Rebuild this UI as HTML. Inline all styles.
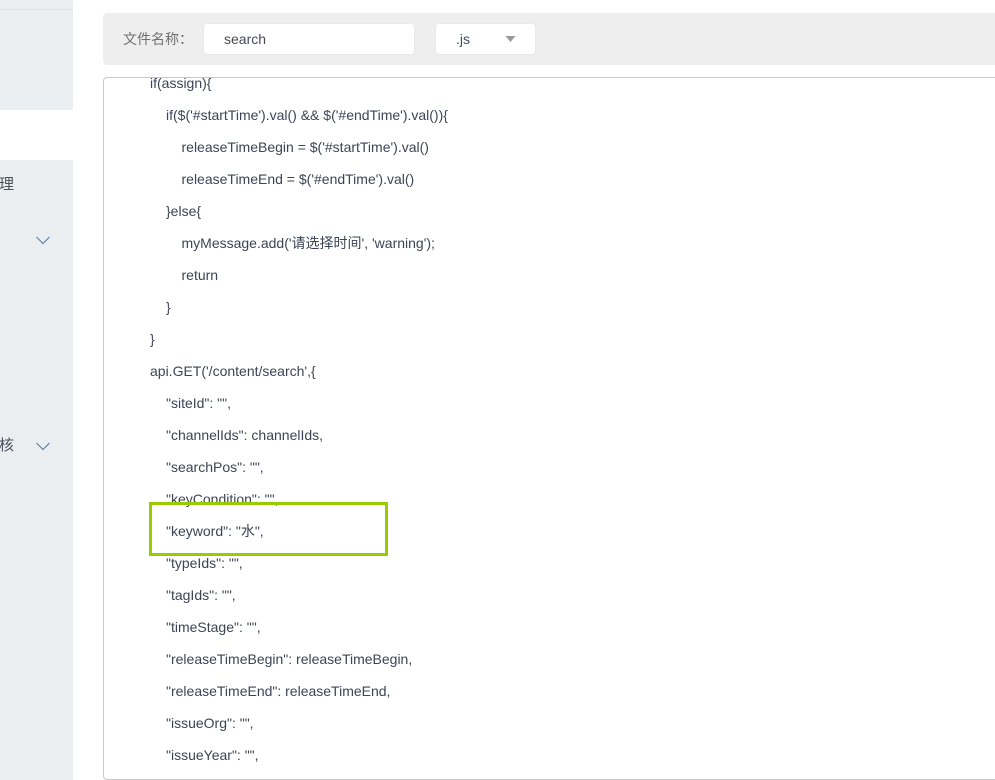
<!DOCTYPE html>
<html>
<head>
<meta charset="utf-8">
<style>
html,body{margin:0;padding:0;width:995px;height:780px;overflow:hidden;background:#fff;font-family:"Liberation Sans","Noto Sans CJK SC",sans-serif;}
.abs{position:absolute;}
.l{position:absolute;font-size:14px;line-height:32px;height:32px;color:#3b4556;white-space:pre;}
</style>
</head>
<body>
<div class="abs" style="left:0;top:0;width:73px;height:110px;background:#ebeef1;"></div>
<div class="abs" style="left:0;top:9px;width:73px;height:1px;background:#dcdfe3;"></div>
<div class="abs" style="left:0;top:160px;width:73px;height:620px;background:#ebeef1;"></div>
<div class="abs" style="left:-1px;top:175px;font-size:15px;line-height:20px;color:#48505c;">理</div>
<div class="abs" style="left:-1px;top:436px;font-size:15px;line-height:20px;color:#48505c;">核</div>
<svg class="abs" style="left:35px;top:235px" width="16" height="11"><path d="M1.500 2L8 8.500L14.500 2" fill="none" stroke="#5b83a8" stroke-width="1.200"/></svg>
<svg class="abs" style="left:35px;top:441px" width="16" height="11"><path d="M1.500 2L8 8.500L14.500 2" fill="none" stroke="#5b83a8" stroke-width="1.200"/></svg>

<div class="abs" style="left:103px;top:13px;width:892px;height:52px;background:#eeeeee;border-radius:4px 0 0 4px;"></div>
<div class="abs" style="left:123px;top:29px;font-size:14px;line-height:20px;color:#707070;">文件名称：</div>
<div class="abs" style="left:203px;top:23px;width:212px;height:32px;background:#fff;border:1px solid #e9e9e9;box-sizing:border-box;border-radius:4px;"></div>
<div class="abs" style="left:224px;top:29px;font-size:14px;line-height:20px;color:#444c58;">search</div>
<div class="abs" style="left:435px;top:23px;width:101px;height:32px;background:#fff;border:1px solid #e9e9e9;box-sizing:border-box;border-radius:4px;"></div>
<div class="abs" style="left:456px;top:29px;font-size:14px;line-height:20px;color:#444c58;">.js</div>
<svg class="abs" style="left:505px;top:35px" width="12" height="8"><path d="M0.500 1H10.500L5.500 7Z" fill="#999"/></svg>

<div class="abs" style="left:103px;top:77px;width:900px;height:703px;box-sizing:border-box;border:1px solid #c8c8c8;border-radius:4px;overflow:hidden;background:#fff;"></div>
<div class="abs" style="left:104px;top:78px;width:891px;height:700px;overflow:hidden;">
<div class="l" style="left:46px;top:-11px;">if(assign){</div>
<div class="l" style="left:62px;top:21px;">if($('#startTime').val() &amp;&amp; $('#endTime').val()){</div>
<div class="l" style="left:77.500px;top:53px;">releaseTimeBegin = $('#startTime').val()</div>
<div class="l" style="left:77.500px;top:85px;">releaseTimeEnd = $('#endTime').val()</div>
<div class="l" style="left:62px;top:117px;">}else{</div>
<div class="l" style="left:77.500px;top:149px;">myMessage.add('请选择时间', 'warning');</div>
<div class="l" style="left:77.500px;top:181px;">return</div>
<div class="l" style="left:62px;top:213px;">}</div>
<div class="l" style="left:46px;top:245px;">}</div>
<div class="l" style="left:46px;top:277px;">api.GET('/content/search',{</div>
<div class="l" style="left:62px;top:309px;">"siteId": "",</div>
<div class="l" style="left:62px;top:341px;">"channelIds": channelIds,</div>
<div class="l" style="left:62px;top:373px;">"searchPos": "",</div>
<div class="l" style="left:62px;top:405px;">"keyCondition": "",</div>
<div class="l" style="left:62px;top:437px;">"keyword": "水",</div>
<div class="l" style="left:62px;top:469px;">"typeIds": "",</div>
<div class="l" style="left:62px;top:501px;">"tagIds": "",</div>
<div class="l" style="left:62px;top:533px;">"timeStage": "",</div>
<div class="l" style="left:62px;top:565px;">"releaseTimeBegin": releaseTimeBegin,</div>
<div class="l" style="left:62px;top:597px;">"releaseTimeEnd": releaseTimeEnd,</div>
<div class="l" style="left:62px;top:629px;">"issueOrg": "",</div>
<div class="l" style="left:62px;top:661px;">"issueYear": "",</div>
</div>

<div class="abs" style="left:149px;top:502px;width:239px;height:54px;box-sizing:border-box;border:3px solid #99cc00;"></div>
</body>
</html>
